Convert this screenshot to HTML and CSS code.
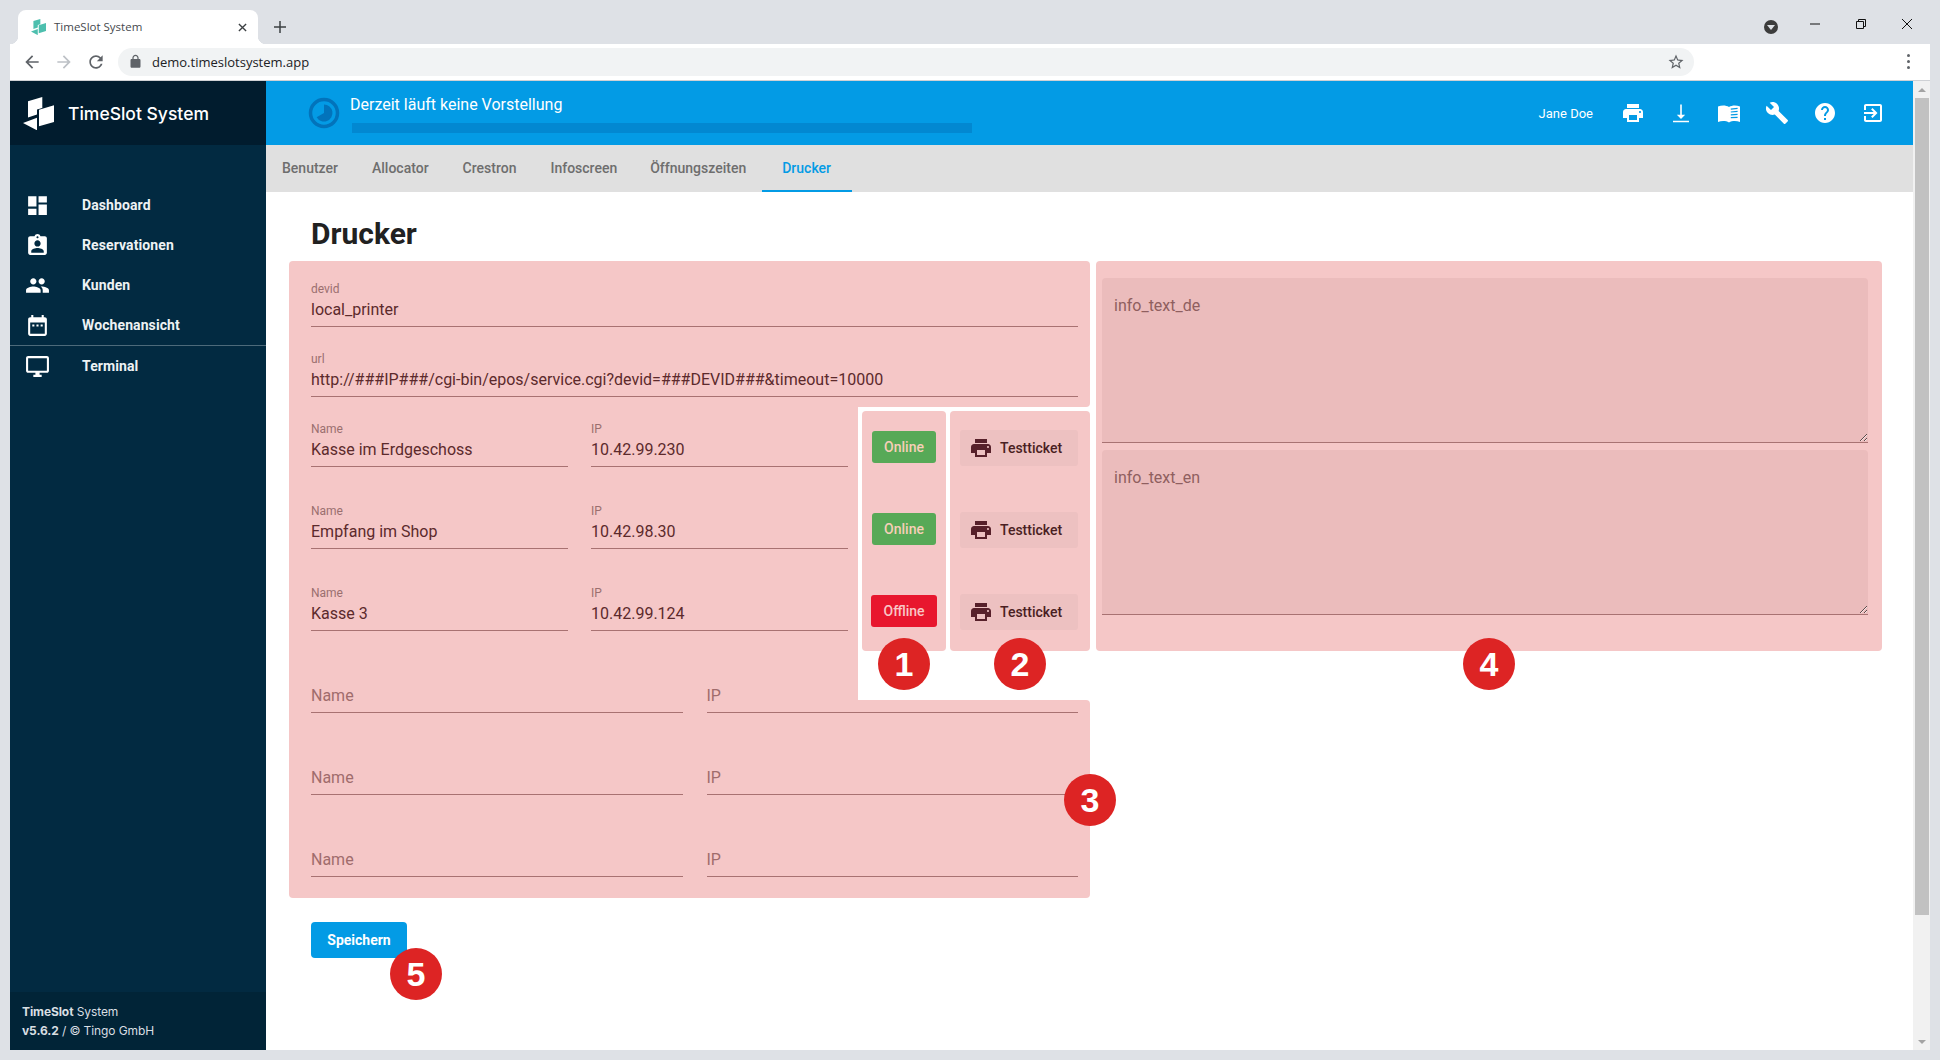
FILE: index.html
```html
<!DOCTYPE html>
<html lang="de">

<head>
    <meta charset="UTF-8">
    <title>TimeSlot System</title>
    <link rel="stylesheet" href="styles.css">
</head>

<body>
    <div class="tabstrip">
        <div class="browser-tab">
            <svg class="favicon" viewBox="23 95 31 33"><path fill="#4dbfae" d="M28 99.300L42.300 95v11L37 107.500v5L28 115.500zM39 107.700L54 103.300V120L39 124.300zM23 121L37 115.700V128.300z"/></svg>
            <span class="browser-tab-title">TimeSlot System</span>
            <svg class="tab-close" viewBox="0 0 10 10"><path d="M1 1l8 8M9 1l-8 8"/></svg>
        </div>
        <svg class="new-tab" viewBox="0 0 12 12"><path d="M6 0v12M0 6h12"/></svg>
        <div class="strip-spacer"></div>
        <div class="profile-dot"><span></span></div>
        <div class="win-btn"><svg viewBox="0 0 12 12"><path d="M1 6h10"/></svg></div>
        <div class="win-btn"><svg viewBox="0 0 12 12"><path d="M1.500 3.500h7v7h-7zM3.500 3.500v-2h7v7h-2"/></svg></div>
        <div class="win-btn"><svg viewBox="0 0 12 12"><path d="M1 1l10 10M11 1l-10 10"/></svg></div>
    </div>

    <div class="toolbar">
        <div class="nav-btn"><svg viewBox="0 0 24 24" fill="#5f6368"><path d="M20 11H7.830l5.590-5.590L12 4l-8 8 8 8 1.410-1.410L7.830 13H20v-2z"/></svg></div>
        <div class="nav-btn"><svg viewBox="0 0 24 24" fill="#bdc1c6"><path d="M4 11h12.170l-5.590-5.590L12 4l8 8-8 8-1.410-1.410L16.170 13H4v-2z"/></svg></div>
        <div class="nav-btn"><svg viewBox="0 0 24 24" fill="#5f6368"><path d="M17.650 6.350C16.200 4.900 14.210 4 12 4c-4.420 0-7.990 3.580-7.990 8s3.570 8 7.990 8c3.730 0 6.840-2.550 7.730-6h-2.080c-.82 2.330-3.040 4-5.650 4-3.310 0-6-2.690-6-6s2.690-6 6-6c1.660 0 3.140.69 4.220 1.780L13 11h7V4l-2.350 2.350z"/></svg></div>
        <div class="omnibox">
            <svg class="lock" viewBox="0 0 24 24" fill="#5f6368"><path d="M18 8h-1V6c0-2.760-2.240-5-5-5S7 3.240 7 6v2H6c-1.100 0-2 .9-2 2v10c0 1.100.9 2 2 2h12c1.100 0 2-.9 2-2V10c0-1.100-.9-2-2-2zM9 6c0-1.660 1.340-3 3-3s3 1.340 3 3v2H9V6z"/></svg>
            <span class="url">demo.timeslotsystem.app</span>
            <svg class="star" viewBox="0 0 24 24" fill="#5f6368"><path d="M22 9.240l-7.190-.62L12 2 9.190 8.630 2 9.240l5.460 4.730L5.820 21 12 17.270 18.180 21l-1.630-7.030L22 9.240zM12 15.400l-3.760 2.270 1-4.280-3.320-2.880 4.380-.38L12 6.100l1.710 4.040 4.380.38-3.320 2.880 1 4.280L12 15.400z"/></svg>
        </div>
        <div class="menu-dots"><span></span><span></span><span></span></div>
    </div>

    <div class="app">
        <aside class="sidebar">
            <div class="brand">
                <svg class="brand-logo" viewBox="23 95 31 33"><path fill="#fff" d="M28 99.300L42.300 95v11L37 107.500v5L28 115.500zM39 107.700L54 103.300V120L39 124.300zM23 121L37 115.700V128.300z"/></svg>
                <span>TimeSlot System</span>
            </div>
            <nav class="side-nav">
                <a class="side-item"><svg viewBox="0 0 24 24"><path d="M3 13h8V3H3v10zm0 8h8v-6H3v6zm10 0h8V11h-8v10zm0-18v6h8V3h-8z"/></svg>Dashboard</a>
                <a class="side-item"><svg viewBox="0 0 24 24"><path d="M19 3h-4.180C14.400 1.840 13.300 1 12 1c-1.300 0-2.400.84-2.820 2H5c-1.100 0-2 .9-2 2v14c0 1.100.9 2 2 2h14c1.100 0 2-.9 2-2V5c0-1.100-.9-2-2-2zm-7 0c.55 0 1 .45 1 1s-.45 1-1 1-1-.45-1-1 .45-1 1-1zm0 4c1.660 0 3 1.340 3 3s-1.340 3-3 3-3-1.340-3-3 1.340-3 3-3zm6 12H6v-1.400c0-2 4-3.100 6-3.100s6 1.100 6 3.100V19z"/></svg>Reservationen</a>
                <a class="side-item"><svg viewBox="0 0 24 24"><path d="M16 11c1.660 0 2.990-1.340 2.990-3S17.660 5 16 5c-1.660 0-3 1.340-3 3s1.340 3 3 3zm-8 0c1.660 0 2.990-1.340 2.990-3S9.660 5 8 5C6.340 5 5 6.340 5 8s1.340 3 3 3zm0 2c-2.330 0-7 1.170-7 3.500V19h14v-2.500c0-2.330-4.670-3.500-7-3.500zm8 0c-.29 0-.62.02-.97.05 1.160.84 1.970 1.970 1.970 3.450V19h6v-2.500c0-2.330-4.670-3.500-7-3.500z"/></svg>Kunden</a>
                <a class="side-item side-item-last"><svg viewBox="0 0 24 24"><path d="M19 4h-1V2h-2v2H8V2H6v2H5c-1.110 0-1.990.9-1.990 2L3 20c0 1.100.89 2 2 2h14c1.100 0 2-.9 2-2V6c0-1.100-.9-2-2-2zm0 16H5V9h14v11zM7 11h2v2H7zm4 0h2v2h-2zm4 0h2v2h-2z"/></svg>Wochenansicht</a>
                <a class="side-item"><svg viewBox="0 0 24 24"><path d="M21 2H3c-1.100 0-2 .9-2 2v12c0 1.100.9 2 2 2h7v2H8v2h8v-2h-2v-2h7c1.100 0 2-.9 2-2V4c0-1.100-.9-2-2-2zm0 14H3V4h18v12z"/></svg>Terminal</a>
            </nav>
            <div class="side-footer">
                <div><b>TimeSlot</b> System</div>
                <div><b>v5.6.2</b> / © Tingo GmbH</div>
            </div>
        </aside>

        <main class="main">
            <header class="topbar">
                <svg class="show-clock" viewBox="0 0 32 32">
                    <circle cx="16" cy="16" r="13.500" fill="none" stroke="#0273bb" stroke-width="3.500"/>
                    <path fill="#0273bb" d="M16 7.500a8.500 8.500 0 1 1-7.360 12.750L16 16z"/>
                </svg>
                <div class="show-status">
                    <div class="show-text">Derzeit läuft keine Vorstellung</div>
                    <div class="show-progress"></div>
                </div>
                <span class="user-name">Jane Doe</span>
                <div class="top-icons">
                    <svg viewBox="0 0 24 24"><path d="M19 8H5c-1.660 0-3 1.340-3 3v6h4v4h12v-4h4v-6c0-1.660-1.340-3-3-3zm-3 11H8v-5h8v5zm3-7c-.55 0-1-.45-1-1s.45-1 1-1 1 .45 1 1-.45 1-1 1zm-1-9H6v4h12V3z"/></svg>
                    <svg viewBox="0 0 24 24"><path d="M4 19.800h16v1.400H4zM11.200 3.500h1.600v10.300h3.400L12 18l-4.200-4.200h3.400z"/></svg>
                    <svg viewBox="0 0 24 24"><path d="M1 5.500c3.500-1.500 8-1.500 11 .5 3-2 7.500-2 11-.5v15.500c-3.500-1.300-8-1.300-11 .5-3-1.800-7.500-1.800-11-.5z"/><path class="book-lines" d="M13.800 8.200l6.800-.9M13.800 11l6.800-.7M13.800 13.800l6.800-.5M13.800 16.600l6.800-.3"/></svg>
                    <svg viewBox="0 0 24 24"><path d="M22.700 19l-9.100-9.100c.9-2.300.4-5-1.500-6.900-2-2-5-2.400-7.400-1.300L9 6 6 9 1.600 4.700C.4 7.100.9 10.100 2.900 12.100c1.900 1.900 4.600 2.400 6.900 1.500l9.100 9.100c.4.4 1 .4 1.400 0l2.300-2.300c.5-.4.5-1.100.1-1.400z"/></svg>
                    <svg viewBox="0 0 24 24"><path d="M12 2C6.480 2 2 6.480 2 12s4.480 10 10 10 10-4.480 10-10S17.520 2 12 2zm1 17h-2v-2h2v2zm2.070-7.750l-.9.92C13.450 12.900 13 13.500 13 15h-2v-.5c0-1.100.45-2.100 1.170-2.830l1.240-1.260c.37-.36.59-.86.59-1.410 0-1.100-.9-2-2-2s-2 .9-2 2H8c0-2.210 1.790-4 4-4s4 1.790 4 4c0 .88-.36 1.680-.93 2.250z"/></svg>
                    <svg viewBox="0 0 24 24"><path d="M10.090 15.590L11.500 17l5-5-5-5-1.410 1.410L12.670 11H3v2h9.670l-2.580 2.590zM19 3H5c-1.110 0-2 .9-2 2v4h2V5h14v14H5v-4H3v4c0 1.100.89 2 2 2h14c1.100 0 2-.9 2-2V5c0-1.100-.9-2-2-2z"/></svg>
                </div>
            </header>

            <nav class="tabs">
                <a class="tab">Benutzer</a>
                <a class="tab">Allocator</a>
                <a class="tab">Crestron</a>
                <a class="tab">Infoscreen</a>
                <a class="tab tab-hours">Öffnungszeiten</a>
                <a class="tab tab-active">Drucker</a>
            </nav>

            <section class="content">
                <h1 class="page-title">Drucker</h1>

                <div class="form-columns">
                    <div class="form-left">
                        <div class="block-top">
                            <div class="field"><div class="field-label">devid</div><div class="field-value">local_printer</div></div>
                            <div class="field"><div class="field-label">url</div><div class="field-value">http://###IP###/cgi-bin/epos/service.cgi?devid=###DEVID###&amp;timeout=10000</div></div>
                        </div>

                        <div class="printer-row">
                            <div class="printer-list">
                                <div class="field"><div class="field-label">Name</div><div class="field-value">Kasse im Erdgeschoss</div></div>
                                <div class="field"><div class="field-label">IP</div><div class="field-value">10.42.99.230</div></div>
                                <div class="field"><div class="field-label">Name</div><div class="field-value">Empfang im Shop</div></div>
                                <div class="field"><div class="field-label">IP</div><div class="field-value">10.42.98.30</div></div>
                                <div class="field"><div class="field-label">Name</div><div class="field-value">Kasse 3</div></div>
                                <div class="field"><div class="field-label">IP</div><div class="field-value">10.42.99.124</div></div>
                            </div>
                            <div class="status-panel">
                                <span class="badge badge-online">Online</span>
                                <span class="badge badge-online">Online</span>
                                <span class="badge badge-offline">Offline</span>
                                <span class="callout callout-side">1</span>
                            </div>
                            <div class="ticket-panel">
                                <button class="btn-ticket"><svg viewBox="0 0 24 24"><path d="M19 8H5c-1.660 0-3 1.340-3 3v6h4v4h12v-4h4v-6c0-1.660-1.340-3-3-3zm-3 11H8v-5h8v5zm3-7c-.55 0-1-.45-1-1s.45-1 1-1 1 .45 1 1-.45 1-1 1zm-1-9H6v4h12V3z"/></svg>Testticket</button>
                                <button class="btn-ticket"><svg viewBox="0 0 24 24"><path d="M19 8H5c-1.660 0-3 1.340-3 3v6h4v4h12v-4h4v-6c0-1.660-1.340-3-3-3zm-3 11H8v-5h8v5zm3-7c-.55 0-1-.45-1-1s.45-1 1-1 1 .45 1 1-.45 1-1 1zm-1-9H6v4h12V3z"/></svg>Testticket</button>
                                <button class="btn-ticket"><svg viewBox="0 0 24 24"><path d="M19 8H5c-1.660 0-3 1.340-3 3v6h4v4h12v-4h4v-6c0-1.660-1.340-3-3-3zm-3 11H8v-5h8v5zm3-7c-.55 0-1-.45-1-1s.45-1 1-1 1 .45 1 1-.45 1-1 1zm-1-9H6v4h12V3z"/></svg>Testticket</button>
                                <span class="callout callout-side">2</span>
                            </div>
                        </div>

                        <div class="block-bottom">
                            <div class="extra-fields">
                                <div class="field"><div class="field-value field-empty">Name</div></div>
                                <div class="field"><div class="field-value field-empty">IP</div></div>
                                <div class="field"><div class="field-value field-empty">Name</div></div>
                                <div class="field"><div class="field-value field-empty">IP</div></div>
                                <div class="field"><div class="field-value field-empty">Name</div></div>
                                <div class="field"><div class="field-value field-empty">IP</div></div>
                            </div>
                            <span class="callout callout-three">3</span>
                        </div>

                        <div class="save-wrap">
                            <button class="btn-save">Speichern</button>
                            <span class="callout callout-five">5</span>
                        </div>
                    </div>

                    <div class="info-panel">
                        <textarea class="info-text" placeholder="info_text_de"></textarea>
                        <textarea class="info-text" placeholder="info_text_en"></textarea>
                        <span class="callout callout-side">4</span>
                    </div>
                </div>
            </section>
        </main>

        <div class="scrollbar">
            <span class="scroll-up"></span>
            <div class="scroll-thumb"></div>
            <span class="scroll-down"></span>
        </div>
    </div>
</body>

</html>
```

FILE: styles.css
```css
* {
    box-sizing: border-box;
}

html,
body {
    height: 100%;
}

body {
    margin: 0;
    background: #dee1e6;
    font-family: Roboto, sans-serif;
    overflow: hidden;
}

svg {
    display: block;
    flex: none;
}

/* browser frame */
.tabstrip {
    display: flex;
    height: 44px;
    padding-right: 10px;
}

.browser-tab {
    position: relative;
    display: flex;
    align-items: center;
    width: 240px;
    height: 34px;
    margin: 10px 0 0 18px;
    padding: 0 11px 0 13px;
    background: #fff;
    border-radius: 8px 8px 0 0;
}

.browser-tab::before,
.browser-tab::after {
    content: "";
    position: absolute;
    bottom: 0;
    width: 8px;
    height: 8px;
}

.browser-tab::before {
    left: -8px;
    background: radial-gradient(circle at 0 0, transparent 8px, #fff 8.500px);
}

.browser-tab::after {
    right: -8px;
    background: radial-gradient(circle at 100% 0, transparent 8px, #fff 8.500px);
}

.favicon {
    width: 15px;
    height: 16px;
}

.browser-tab-title {
    flex: 1;
    margin: -2px 0 0 8px;
    font-family: "Open Sans", sans-serif;
    font-size: 11.500px;
    color: #45494e;
}

.tab-close {
    width: 9px;
    height: 9px;
    fill: none;
    stroke: #3c4043;
    stroke-width: 1.500;
}

.new-tab {
    width: 12px;
    height: 12px;
    margin: 21px 0 0 16px;
    fill: none;
    stroke: #3c4043;
    stroke-width: 1.500;
}

.strip-spacer {
    flex: 1;
}

.profile-dot {
    display: flex;
    align-items: center;
    justify-content: center;
    width: 14px;
    height: 14px;
    margin: 20px 14px 0 0;
    background: #3c3c3c;
    border-radius: 50%;
}

.profile-dot span {
    width: 0;
    height: 0;
    border-left: 4px solid transparent;
    border-right: 4px solid transparent;
    border-top: 5px solid #dee1e6;
}

.win-btn {
    display: flex;
    align-items: center;
    justify-content: center;
    width: 46px;
    height: 48px;
}

.win-btn svg {
    width: 12px;
    height: 12px;
    fill: none;
    stroke: #111;
    stroke-width: 1;
}

.toolbar {
    display: flex;
    align-items: center;
    height: 37px;
    margin: 0 10px;
    padding: 0 6px 1px;
    background: #fff;
    border-bottom: 1px solid #cfd1d5;
}

.nav-btn {
    display: flex;
    align-items: center;
    justify-content: center;
    width: 32px;
}

.nav-btn svg {
    width: 20px;
    height: 20px;
}

.omnibox {
    display: flex;
    align-items: center;
    flex: 1;
    height: 28px;
    margin: 0 198px 0 6px;
    padding: 0 9px 0 10px;
    background: #f1f3f4;
    border-radius: 14px;
}

.lock {
    width: 15px;
    height: 15px;
}

.url {
    flex: 1;
    margin-left: 9px;
    font-family: "Open Sans", sans-serif;
    font-size: 13px;
    color: #202124;
}

.star {
    width: 18px;
    height: 18px;
}

.menu-dots {
    display: flex;
    flex-direction: column;
    align-items: center;
    gap: 3px;
    width: 32px;
}

.menu-dots span {
    width: 3px;
    height: 3px;
    background: #5f6368;
    border-radius: 50%;
}

/* app layout */
.app {
    display: flex;
    height: 969px;
    margin: 0 10px;
    background: #fff;
}

.sidebar {
    display: flex;
    flex-direction: column;
    width: 256px;
    background: #022a41;
    color: #fff;
}

.brand {
    display: flex;
    align-items: center;
    gap: 14px;
    height: 64px;
    padding-left: 13px;
    background: #011c2e;
    font-family: Inter, sans-serif;
    font-size: 17.500px;
    font-weight: 500;
}

.brand-logo {
    width: 31px;
    height: 33px;
}

.side-nav {
    flex: 1;
    padding-top: 40px;
}

.side-item {
    display: flex;
    align-items: center;
    gap: 34px;
    height: 40px;
    padding-left: 15px;
    font-size: 14px;
    font-weight: 700;
    letter-spacing: 0.1px;
    color: #eef2f4;
}

.side-item svg {
    width: 25px;
    height: 25px;
    margin-right: -2px;
    fill: #fff;
}

.side-item-last {
    border-bottom: 1px solid #4d6a7a;
    height: 41px;
}

.side-footer {
    height: 58px;
    padding: 10px 0 0 12px;
    background: #012437;
    font-family: Inter, sans-serif;
    font-size: 12px;
    line-height: 19px;
    letter-spacing: -0.1px;
    color: #d9dfe3;
}

.main {
    display: flex;
    flex-direction: column;
    flex: 1;
    min-width: 0;
}

.topbar {
    display: flex;
    align-items: center;
    height: 64px;
    padding: 0 28px 0 42px;
    background: #039be5;
    color: #fff;
}

.show-clock {
    width: 32px;
    height: 32px;
}

.show-status {
    flex: 1;
    margin: 2px 0 0 10px;
}

.show-text {
    font-size: 16px;
    line-height: 20px;
}

.show-progress {
    width: 620px;
    height: 10px;
    margin: 8px 0 0 2px;
    background: #0288d1;
}

.user-name {
    font-size: 13px;
    margin-right: 28px;
}

.top-icons {
    display: flex;
    gap: 24px;
}

.top-icons svg {
    width: 24px;
    height: 24px;
    fill: #fff;
}

.book-lines {
    fill: none;
    stroke: #039be5;
    stroke-width: 1.200;
}

.tabs {
    display: flex;
    height: 47px;
    padding-left: 16px;
    background: #e0e0e0;
}

.tab {
    display: flex;
    align-items: center;
    margin-right: 34px;
    border-bottom: 2px solid transparent;
    font-size: 14px;
    font-weight: 500;
    color: #6e6e6e;
}

.tab-hours {
    margin-left: -1px;
    margin-right: 36px;
}

.tab-active {
    margin-left: -20px;
    padding: 0 21px 0 20px;
    color: #039be5;
    border-bottom-color: #039be5;
}

.content {
    flex: 1;
    padding-left: 23px;
}

.page-title {
    margin: 22px 0 7px 22px;
    font-size: 30px;
    font-weight: 700;
    line-height: 40px;
    color: #212121;
}

.form-columns {
    display: flex;
    align-items: flex-start;
    gap: 6px;
}

.form-left {
    width: 801px;
}

/* pink highlighted blocks */
.block-top {
    display: flex;
    flex-direction: column;
    gap: 25px;
    height: 146px;
    padding: 21px 12px 0 22px;
    background: #f5c7c7;
    border-radius: 4px 4px 4px 0;
}

.printer-row {
    display: flex;
    height: 293px;
}

.printer-list {
    display: grid;
    grid-template-columns: 1fr 1fr;
    grid-auto-rows: 45px;
    gap: 37px 23px;
    width: 569px;
    padding: 15px 10px 0 22px;
    background: #f5c7c7;
}

.status-panel,
.ticket-panel {
    position: relative;
    display: flex;
    flex-direction: column;
    height: 240px;
    margin: 4px 0 0 4px;
    background: #f5c7c7;
    border-radius: 4px;
}

.status-panel {
    align-items: center;
    gap: 50px;
    width: 84px;
    padding-top: 20px;
}

.ticket-panel {
    gap: 46px;
    width: 140px;
    padding: 19px 0 0 10px;
}

.block-bottom {
    position: relative;
    display: flow-root;
    padding: 0 12px 21px 22px;
    background: #f5c7c7;
    border-radius: 0 4px 4px 4px;
}

.extra-fields {
    position: relative;
    display: grid;
    grid-template-columns: 1fr 1fr;
    gap: 51px 24px;
    margin-top: -18px;
}

.field {
    border-bottom: 1px solid #a87272;
    padding-bottom: 4px;
}

.field-label {
    font-size: 12px;
    line-height: 14px;
    color: #9a6f6f;
}

.field-value {
    margin-top: 2px;
    font-size: 16px;
    line-height: 24px;
    color: #5c2a2c;
}

.field-empty {
    color: #a06c6c;
}

.badge {
    display: flex;
    align-items: center;
    justify-content: center;
    height: 32px;
    padding-bottom: 1px;
    font-size: 14px;
    font-weight: 500;
    color: #f6cfb8;
    border-radius: 3px;
}

.badge-online {
    width: 64px;
    background: #57a957;
}

.badge-offline {
    width: 66px;
    background: #e8162e;
    color: #f8c6c6;
}

.btn-ticket {
    display: flex;
    align-items: center;
    gap: 7px;
    width: 118px;
    height: 36px;
    padding: 0 0 0 9px;
    background: #edc1c1;
    border: 0;
    border-radius: 3px;
    font-family: Roboto, sans-serif;
    font-size: 14px;
    font-weight: 500;
    color: #4a1f23;
}

.btn-ticket svg {
    width: 24px;
    height: 24px;
    fill: #57202a;
}

.info-panel {
    position: relative;
    display: flex;
    flex-direction: column;
    gap: 7px;
    width: 786px;
    height: 390px;
    padding: 17px 14px 0 6px;
    background: #f5c7c7;
    border-radius: 4px;
}

.info-text {
    display: block;
    width: 100%;
    height: 165px;
    padding: 16px 12px 0;
    background: #ebbcbc;
    border: 0;
    border-bottom: 1px solid #a87272;
    border-radius: 4px 4px 0 0;
    outline: none;
    font-family: Roboto, sans-serif;
    font-size: 16px;
    line-height: 24px;
}

.info-text::placeholder {
    color: #8f5f5f;
}

.save-wrap {
    position: relative;
    margin: 24px 0 0 22px;
}

.btn-save {
    display: block;
    width: 96px;
    height: 36px;
    background: #039be5;
    border: 0;
    border-radius: 4px;
    font-family: Roboto, sans-serif;
    font-size: 14px;
    font-weight: 700;
    color: #fff;
}

/* numbered markers */
.callout {
    position: absolute;
    display: flex;
    align-items: center;
    justify-content: center;
    width: 52px;
    height: 52px;
    background: #dd2424;
    border-radius: 50%;
    font-family: "Liberation Sans", sans-serif;
    font-size: 34px;
    font-weight: 700;
    color: #fff;
}

.callout-side {
    left: 50%;
    bottom: -39px;
    margin-left: -26px;
}

.callout-three {
    right: -26px;
    top: 74px;
}

.callout-five {
    left: 79px;
    top: 26px;
}

.scrollbar {
    display: flex;
    flex-direction: column;
    align-items: center;
    width: 17px;
    background: #f1f1f1;
}

.scroll-up,
.scroll-down {
    flex: none;
    width: 0;
    height: 0;
    margin: 7px 0 6px;
    border-left: 4px solid transparent;
    border-right: 4px solid transparent;
}

.scroll-up {
    border-bottom: 4px solid #a3a3a3;
}

.scroll-down {
    margin-top: auto;
    border-top: 4px solid #a3a3a3;
}

.scroll-thumb {
    width: 14px;
    height: 817px;
    background: #c1c1c1;
}
```
